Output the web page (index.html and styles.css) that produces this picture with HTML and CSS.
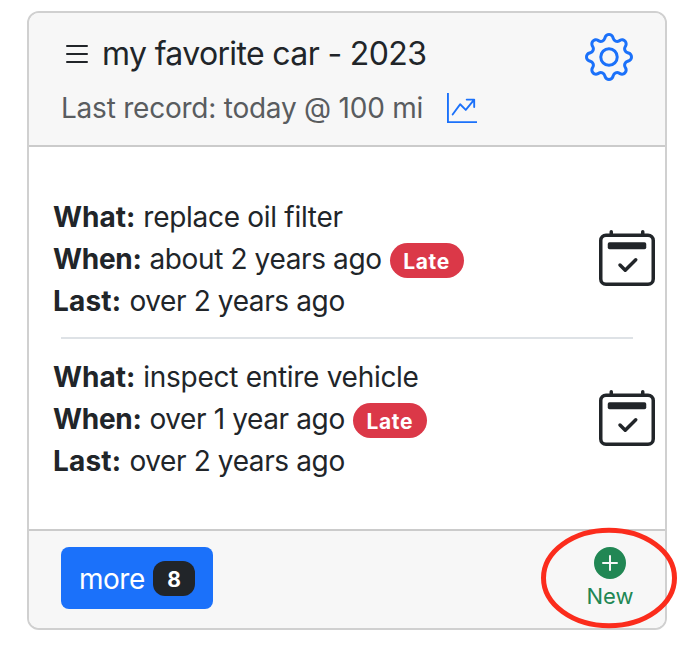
FILE: index.html
```html
<!DOCTYPE html>
<html lang="en">
<head>
<meta charset="utf-8">
<title>Maintenance</title>
<link rel="stylesheet" href="styles.css">
</head>
<body>
<article class="card">
  <header class="card-header">
    <div class="heading">
      <div class="title-row">
        <svg class="icon-list" viewBox="0 0 16 16"><path d="M3 4h10M3 8h10M3 12h10" fill="none" stroke="currentColor" stroke-linecap="round"/></svg>
        <h1 class="title">my favorite car - 2023</h1>
      </div>
      <div class="record-row">
        <span class="record">Last record: today @ 100 mi</span>
        <svg class="icon-graph" viewBox="0 0 16 16"><path fill-rule="evenodd" d="M0 0h1v15h15v1H0zm10 3.5a.5.5 0 0 1 .5-.5h4a.5.5 0 0 1 .5.5v4a.5.5 0 0 1-1 0V4.9l-3.613 4.417a.5.5 0 0 1-.74.037L7.06 6.767l-3.656 5.027a.5.5 0 0 1-.808-.588l4-5.5a.5.5 0 0 1 .758-.06l2.609 2.61L13.445 4H10.5a.5.5 0 0 1-.5-.5"/></svg>
      </div>
    </div>
    <svg class="icon-gear" viewBox="0 0 16 16"><path d="M8 4.754a3.246 3.246 0 1 0 0 6.492 3.246 3.246 0 0 0 0-6.492M5.754 8a2.246 2.246 0 1 1 4.492 0 2.246 2.246 0 0 1-4.492 0"/><path d="M9.796 1.343c-.527-1.79-3.065-1.79-3.592 0l-.094.319a.873.873 0 0 1-1.255.52l-.292-.16c-1.64-.892-3.433.902-2.54 2.541l.159.292a.873.873 0 0 1-.52 1.255l-.319.094c-1.79.527-1.79 3.065 0 3.592l.319.094a.873.873 0 0 1 .52 1.255l-.16.292c-.892 1.64.901 3.434 2.541 2.54l.292-.159a.873.873 0 0 1 1.255.52l.094.319c.527 1.79 3.065 1.79 3.592 0l.094-.319a.873.873 0 0 1 1.255-.52l.292.16c1.64.893 3.434-.902 2.54-2.541l-.159-.292a.873.873 0 0 1 .52-1.255l.319-.094c1.79-.527 1.79-3.065 0-3.592l-.319-.094a.873.873 0 0 1-.52-1.255l.16-.292c.893-1.64-.902-3.433-2.541-2.54l-.292.159a.873.873 0 0 1-1.255-.52zm-2.633.283c.246-.835 1.428-.835 1.674 0l.094.319a1.873 1.873 0 0 0 2.693 1.115l.291-.16c.764-.415 1.6.42 1.184 1.185l-.159.292a1.873 1.873 0 0 0 1.116 2.692l.318.094c.835.246.835 1.428 0 1.674l-.319.094a1.873 1.873 0 0 0-1.115 2.693l.16.291c.415.764-.42 1.6-1.185 1.184l-.291-.159a1.873 1.873 0 0 0-2.693 1.116l-.094.318c-.246.835-1.428.835-1.674 0l-.094-.319a1.873 1.873 0 0 0-2.692-1.115l-.292.16c-.764.415-1.6-.42-1.184-1.185l.159-.291A1.873 1.873 0 0 0 1.945 8.93l-.319-.094c-.835-.246-.835-1.428 0-1.674l.319-.094A1.873 1.873 0 0 0 3.06 4.377l-.16-.292c-.415-.764.42-1.6 1.185-1.184l.292.159a1.873 1.873 0 0 0 2.692-1.115z"/></svg>
  </header>
  <div class="card-body">
    <section class="task">
      <div class="details">
        <div class="line"><b>What:</b> <span class="what">replace oil filter</span></div>
        <div class="line"><b class="when">When:</b> <span>about 2 years ago</span> <span class="badge late">Late</span></div>
        <div class="line"><b class="last">Last:</b> <span>over 2 years ago</span></div>
      </div>
      <svg class="icon-calendar" viewBox="0 0 16 16"><path d="M10.854 8.146a.5.5 0 0 1 0 .708l-3 3a.5.5 0 0 1-.708 0l-1.5-1.5a.5.5 0 0 1 .708-.708L7.5 10.793l2.646-2.647a.5.5 0 0 1 .708 0"/><path d="M3.5 0a.5.5 0 0 1 .5.5V1h8V.5a.5.5 0 0 1 1 0V1h1a2 2 0 0 1 2 2v11a2 2 0 0 1-2 2H2a2 2 0 0 1-2-2V3a2 2 0 0 1 2-2h1V.5a.5.5 0 0 1 .5-.5M2 2a1 1 0 0 0-1 1v11a1 1 0 0 0 1 1h12a1 1 0 0 0 1-1V3a1 1 0 0 0-1-1z"/><path d="M2.5 4a.5.5 0 0 1 .5-.5h10a.5.5 0 0 1 .5.5v1a.5.5 0 0 1-.5.5H3a.5.5 0 0 1-.5-.5z"/></svg>
    </section>
    <hr class="divider">
    <section class="task">
      <div class="details">
        <div class="line"><b>What:</b> <span class="what">inspect entire vehicle</span></div>
        <div class="line"><b class="when">When:</b> <span>over 1 year ago</span> <span class="badge late">Late</span></div>
        <div class="line"><b class="last">Last:</b> <span>over 2 years ago</span></div>
      </div>
      <svg class="icon-calendar" viewBox="0 0 16 16"><path d="M10.854 8.146a.5.5 0 0 1 0 .708l-3 3a.5.5 0 0 1-.708 0l-1.5-1.5a.5.5 0 0 1 .708-.708L7.5 10.793l2.646-2.647a.5.5 0 0 1 .708 0"/><path d="M3.5 0a.5.5 0 0 1 .5.5V1h8V.5a.5.5 0 0 1 1 0V1h1a2 2 0 0 1 2 2v11a2 2 0 0 1-2 2H2a2 2 0 0 1-2-2V3a2 2 0 0 1 2-2h1V.5a.5.5 0 0 1 .5-.5M2 2a1 1 0 0 0-1 1v11a1 1 0 0 0 1 1h12a1 1 0 0 0 1-1V3a1 1 0 0 0-1-1z"/><path d="M2.5 4a.5.5 0 0 1 .5-.5h10a.5.5 0 0 1 .5.5v1a.5.5 0 0 1-.5.5H3a.5.5 0 0 1-.5-.5z"/></svg>
    </section>
  </div>
  <footer class="card-footer">
    <button class="more" type="button"><span class="more-label">more</span><span class="badge count">8</span></button>
    <a class="new">
      <svg class="icon-plus" viewBox="0 0 16 16"><path d="M16 8A8 8 0 1 1 0 8a8 8 0 0 1 16 0M8.5 4.5a.5.5 0 0 0-1 0v3h-3a.5.5 0 0 0 0 1h3v3a.5.5 0 0 0 1 0v-3h3a.5.5 0 0 0 0-1h-3z"/></svg>
      <span>New</span>
      <svg class="ring" viewBox="0 0 138 102"><ellipse cx="69" cy="51" rx="65.5" ry="47.7"/></svg>
    </a>
  </footer>
</article>
</body>
</html>
```

FILE: styles.css
```css
* { box-sizing: border-box; }
body {
  margin: 0;
  padding: 11px 27px 0;
  background: #fff;
  color: #212529;
  font: 28px/42px Inter, "Liberation Sans", sans-serif;
}
svg { display: block; flex: none; fill: currentColor; }
.card {
  display: flex;
  flex-direction: column;
  width: 640px;
  height: 619px;
  border: 2px solid #d0d0d0;
  border-radius: 12px;
  overflow: visible;
}
.card-header {
  display: flex;
  justify-content: space-between;
  height: 134px;
  padding: 20px 32px 0;
  border-bottom: 2px solid #cbcbcb;
  border-radius: 10px 10px 0 0;
  background: #f7f7f7;
}
.title-row { display: flex; align-items: center; height: 42px; gap: 9px; }
.icon-list { width: 32px; height: 32px; }
.title { margin: 0; font-size: 32px; font-weight: 400; line-height: 42px; letter-spacing: -0.64px; white-space: nowrap; }
.record-row { display: flex; align-items: center; height: 42px; margin-top: 12px; gap: 24px; }
.record { color: #595c5f; letter-spacing: -0.23px; white-space: nowrap; }
.icon-graph { width: 30px; height: 30px; color: #1b71fa; }
.icon-gear { width: 48px; height: 48px; color: #1b71fa; }
.card-body { height: 382px; padding: 49px 10px 0 24px; }
.task { display: flex; align-items: flex-start; justify-content: space-between; height: 126px; }
.line { display: flex; align-items: center; height: 42px; gap: 8px; letter-spacing: -0.38px; white-space: nowrap; }
.line b { font-weight: 700; letter-spacing: 0; }
.line .when { letter-spacing: -0.3px; }
.line .last { letter-spacing: 0.2px; }
.line .what { letter-spacing: -0.29px; }
.icon-calendar { width: 56px; height: 56px; margin-top: 34px; }
.divider { height: 2px; margin: 15px 22px 17px 8px; border: 0; background: #dee2e6; }
.badge { display: flex; flex: none; align-items: center; justify-content: center; padding-top: 2px; color: #fff; font-size: 21px; font-weight: 700; line-height: 1; }
.late { width: 74px; height: 35px; margin-top: 2px; border-radius: 18px; background: #db3848; letter-spacing: 0.7px; }
.card-footer {
  display: flex;
  justify-content: space-between;
  align-items: flex-start;
  height: 99px;
  padding: 16px 32px 0;
  border-top: 2px solid #cbcbcb;
  border-radius: 0 0 10px 10px;
  background: #f7f7f7;
}
.more {
  display: flex;
  align-items: center;
  width: 152px;
  height: 62px;
  padding: 0 18px;
  border: 0;
  border-radius: 8px;
  background: #1b71fa;
  color: #fff;
  font: inherit;
}
.more-label { padding-top: 2px; letter-spacing: -0.5px; }
.count { width: 42px; height: 35px; border-radius: 12px; background: #212529; margin-left: auto; }
.new { position: relative; display: flex; flex-direction: column; align-items: center; width: 46px; color: #218754; font-size: 22px; line-height: 34px; }
.icon-plus { width: 32px; height: 32px; }
.ring { position: absolute; left: -47px; top: -20px; width: 138px; height: 102px; }
.ring ellipse { fill: none; stroke: #fb2c1c; stroke-width: 5; }
```
